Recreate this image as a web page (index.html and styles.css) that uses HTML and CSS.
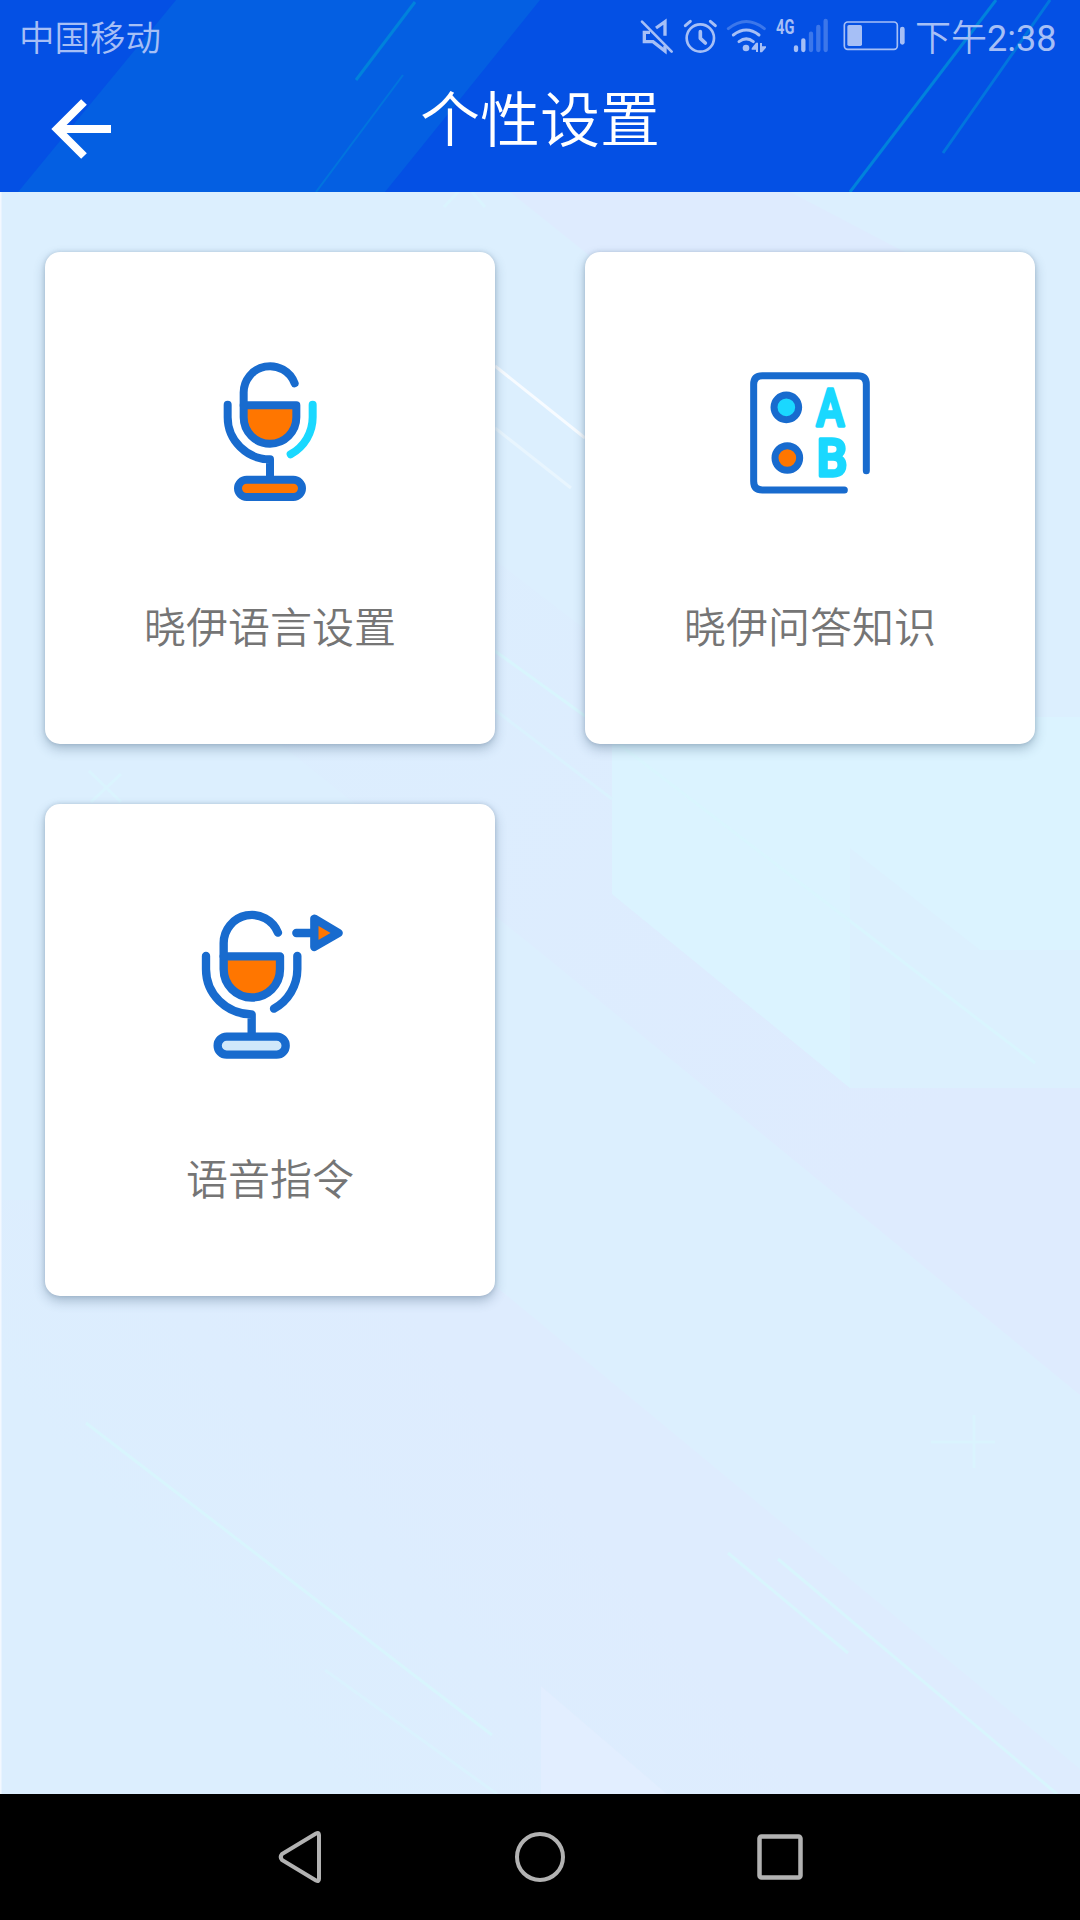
FILE: index.html
```html
<!DOCTYPE html>
<html lang="zh-CN">
<head>
    <meta charset="UTF-8">
    <meta name="viewport" content="width=device-width, initial-scale=1.0">
    <title>个性设置</title>
    <link rel="stylesheet" href="styles.css">
</head>
<body>
    <header class="header">
        <svg class="header-bg" viewBox="0 0 1080 192">
            <polygon points="176,0 540,0 385,192 18,192" fill="#045fe2"/>
            <g fill="none" stroke="#0082dc">
                <path d="M415 2L356 80" stroke-width="3"/>
                <path d="M403 75L316 192" stroke-width="2" opacity=".6"/>
                <path d="M996 0L850 192" stroke-width="3"/>
                <path d="M1050 0L943 153" stroke-width="3" opacity=".75"/>
            </g>
        </svg>

        <!-- Status bar -->
        <div class="status-bar">
            <span class="carrier">中国移动</span>
            <div class="status-icons">
                <svg width="34" height="36" viewBox="60 54 102 108" fill="none" stroke="#a6bff6" stroke-width="7">
                    <path d="M66 65L155 155" stroke-width="8" stroke-linecap="round"/>
                    <path d="M90 97H73V125H99L135 153V137M108 84L135 65V107" stroke-width="10"/>
                </svg>
                <svg width="34" height="36" viewBox="189 54 102 108" fill="none" stroke="#a6bff6" stroke-width="8" stroke-linecap="round">
                    <circle cx="241" cy="114" r="41"/>
                    <path d="M241 95V115L256 129" stroke-width="11" stroke-linejoin="round"/>
                    <path d="M196 77L211 64M271 64L286 77" stroke-width="9"/>
                </svg>
                <svg width="41" height="36" viewBox="318 54 123 108" fill="none" stroke="#a6bff6" stroke-width="9" stroke-linecap="round">
                    <path d="M325 86Q379 43 433 86" opacity=".35"/>
                    <path d="M340 105Q379 75 417 105"/>
                    <path d="M357 125Q379 108 400 125"/>
                    <circle cx="378" cy="144" r="10" fill="#a6bff6" stroke="none"/>
                    <path d="M395 145L408 128H414V156H408V149H395ZM420 129H426V139H438V143L426 157H420Z" fill="#a6bff6" stroke="none"/>
                </svg>
                <svg width="53" height="36" viewBox="468 54 159 108" stroke="#a6bff6" stroke-width="13" stroke-linecap="round">
                    <text class="net-type" x="468" y="101" textLength="55" lengthAdjust="spacingAndGlyphs">4G</text>
                    <path d="M528 142V150M550 121V150"/>
                    <path d="M573 101V150M595 81V150M617 63V150" opacity=".35"/>
                </svg>
                <svg width="68" height="36" viewBox="654 54 204 108">
                    <rect x="673" y="66" width="159" height="82" rx="10" fill="none" stroke="#a6bff6" stroke-width="5"/>
                    <rect x="682" y="75" width="44" height="63" rx="5" fill="#a6bff6"/>
                    <rect x="840" y="80" width="14" height="54" rx="7" fill="#a6bff6"/>
                </svg>
                <span class="time">下午<b>2:38</b></span>
            </div>
        </div>

        <!-- Title bar -->
        <div class="title-bar">
            <a href="#" class="back" aria-label="返回">
                <svg width="62" height="64" viewBox="0 0 62 64" fill="none" stroke="#fff">
                    <path d="M34 5L7 32L34 59M7 32H61" stroke-width="8"/>
                </svg>
            </a>
            <h1>个性设置</h1>
        </div>
    </header>

    <main class="content">
        <svg class="content-bg" viewBox="0 192 1080 1602">
            <defs>
                <linearGradient id="fade" gradientUnits="userSpaceOnUse" x1="150" y1="1560" x2="430" y2="1330">
                    <stop offset="0" stop-color="#dceefe"/>
                    <stop offset="1" stop-color="#deecfe"/>
                </linearGradient>
                <linearGradient id="band" gradientUnits="userSpaceOnUse" x1="300" y1="600" x2="900" y2="1150">
                    <stop offset="0" stop-color="#dceefe"/>
                    <stop offset="1" stop-color="#deebfe"/>
                </linearGradient>
            </defs>
            <polygon points="510,192 790,192 920,260 595,260" fill="#deebfe"/>
            <polygon points="280,744 495,560 612,650 612,894 850,1088 1080,1088 1080,1395 861,1215 540,952" fill="url(#band)"/>
            <polygon points="0,1200 390,1200 516,1303 1080,1769 1080,1794 0,1794" fill="url(#fade)"/>
            <polygon points="612,717 1080,717 1080,1088 850,1088 612,894" fill="#dbf3ff"/>
            <polygon points="850,848 980,950 1080,950 1080,1088 850,1088" fill="#dcf0fe"/>
            <polygon points="541,1686 667,1794 541,1794" fill="#e2eeff"/>
            <g fill="none" stroke="#d8f5fd" stroke-width="3">
                <path d="M495 366L585 438" stroke="#f7fbff"/>
                <path d="M495 428L571 488" stroke="#e8f5fe"/>
                <path d="M495 651L585 716M86 1423L492 1735M728 1553L848 1653M778 1559L1057 1794"/>
                <path d="M495 710L612 799M325 1670L497 1794" stroke="#daf2fe"/>
                <path d="M620 745L850 921L1035 1063" stroke="#d9f5fe"/>
                <path d="M974 1415V1468M931 1442H995M89 771L121 802M121 774L91 802M444 207L458 192M472 192L485 207" stroke="#daf4fe"/>
            </g>
            <path d="M.5 192V1794" stroke="#f3f8ff" stroke-width="2"/>
        </svg>

        <a href="#" class="card">
            <svg width="180" height="200" viewBox="0 0 540 600" fill="none" stroke="#186bce" stroke-width="24" stroke-linecap="round" stroke-linejoin="round">
                <path d="M191 226H349V262A79 79 0 0 1 191 262Z" fill="#ff7600"/>
                <path d="M191 226V189A79 79 0 0 1 344 160"/>
                <path d="M143 224V262C143 331 200 388 270 388V449"/>
                <path d="M398 224V262C398 308 373 350 332 373" stroke="#1ad8ff"/>
                <rect x="174" y="449" width="192" height="52" rx="26" fill="#ff7600"/>
            </svg>
            <span class="label">晓伊语言设置</span>
        </a>

        <a href="#" class="card">
            <svg width="180" height="200" viewBox="0 -60 540 600" fill="none" stroke="#186bce" stroke-width="21" stroke-linecap="round" stroke-linejoin="round">
                <path d="M373 420H127Q101 420 101 394V103Q101 77 127 77H413Q439 77 439 103V362"/>
                <circle cx="199" cy="172" r="37" fill="#1ad8ff"/>
                <circle cx="202" cy="324" r="37" fill="#ff7600"/>
                <text class="option" x="289" y="227" textLength="84" lengthAdjust="spacingAndGlyphs">A</text>
                <text class="option" x="290" y="378" textLength="92" lengthAdjust="spacingAndGlyphs">B</text>
            </svg>
            <span class="label">晓伊问答知识</span>
        </a>

        <a href="#" class="card">
            <svg width="180" height="200" viewBox="0 -24 540 600" fill="none" stroke="#186bce" stroke-width="25" stroke-linecap="round" stroke-linejoin="round">
                <path d="M131 199H300V238A84.500 84.500 0 0 1 131 238Z" fill="#ff7600"/>
                <path d="M131 199V160A84.500 84.500 0 0 1 294 128"/>
                <path d="M78 198V238C78 312 139 373 215 373V440"/>
                <path d="M352 198V238C352 287 325 332 282 356"/>
                <rect x="113" y="440" width="204" height="54" rx="27" fill="#d0e8fa"/>
                <path d="M349 129H398M403 86V171L476 129Z" fill="#ff7600"/>
            </svg>
            <span class="label">语音指令</span>
        </a>
    </main>

    <!-- System navigation -->
    <nav class="nav-bar">
        <svg width="48" height="60" viewBox="0 0 48 60" fill="none" stroke="#b2b2b2" stroke-width="4">
            <path d="M43 8V52Q43 55 40 53.500L6 33Q3.500 30 6 27L40 6.500Q43 5 43 8Z"/>
        </svg>
        <svg width="60" height="60" viewBox="0 0 60 60" fill="none" stroke="#b2b2b2" stroke-width="4">
            <circle cx="30" cy="30" r="23"/>
        </svg>
        <svg width="48" height="60" viewBox="0 0 48 60" fill="none" stroke="#b2b2b2" stroke-width="4.500">
            <rect x="3.500" y="9.500" width="41" height="41" rx="2"/>
        </svg>
    </nav>
</body>
</html>
```
FILE: styles.css
```css
* {
    box-sizing: border-box;
}

body {
    font-family: Roboto, "Noto Sans CJK SC", sans-serif;
    display: flex;
    flex-direction: column;
    width: 1080px;
    height: 1920px;
    margin: 0;
    overflow: hidden;
}

svg {
    display: block;
    flex-shrink: 0;
    overflow: visible;
}

a {
    color: inherit;
    text-decoration: none;
}

.header {
    position: relative;
    height: 192px;
    background-color: #0450e4;
    color: white;
}

.header-bg,
.content-bg {
    position: absolute;
    top: 0;
    left: 0;
    width: 100%;
    height: 100%;
    overflow: hidden;
}

.status-bar {
    position: relative;
    display: flex;
    justify-content: space-between;
    align-items: center;
    height: 72px;
    padding: 0 24px 0 19px;
    color: #a6bff6;
}

.carrier {
    padding-top: 5px;
    font-size: 35.5px;
    font-weight: 350;
    line-height: 52px;
}

.status-icons {
    display: flex;
    align-items: center;
    gap: 9px;
}

.time {
    width: 141px;
    padding-bottom: 3px;
    font-size: 36px;
    font-weight: 350;
    white-space: nowrap;
}

.time b {
    font-weight: 400;
}

.net-type {
    font-size: 60px;
    font-weight: 700;
    fill: #a6bff6;
    stroke: none;
}

.title-bar {
    position: relative;
    display: grid;
    grid-template-columns: 120px 1fr 120px;
    height: 120px;
}

.back {
    padding: 25px 0 0 50px;
}

h1 {
    margin: 0;
    font-size: 60px;
    font-weight: 350;
    line-height: 99px;
    text-align: center;
}

.content {
    position: relative;
    flex: 1;
    display: grid;
    grid-template-columns: 450px 450px;
    grid-auto-rows: 492px;
    align-content: start;
    gap: 60px 90px;
    padding: 60px 45px;
    background-color: #dceffe;
}

.card {
    position: relative;
    display: flex;
    flex-direction: column;
    align-items: center;
    padding-top: 78px;
    background-color: white;
    border-radius: 15px;
    box-shadow: 0 5px 12px rgba(50, 80, 110, 0.32), 0 0 4px rgba(50, 80, 110, 0.2);
}

.label {
    margin-top: 68px;
    font-size: 42px;
    font-weight: 350;
    line-height: 62px;
    color: #757575;
}

.option {
    font-size: 155px;
    font-weight: 500;
    fill: #1ad8ff;
    stroke: #1ad8ff;
    stroke-width: 10px;
}

.nav-bar {
    display: flex;
    justify-content: center;
    align-items: center;
    gap: 186px;
    height: 126px;
    background-color: black;
}
```
